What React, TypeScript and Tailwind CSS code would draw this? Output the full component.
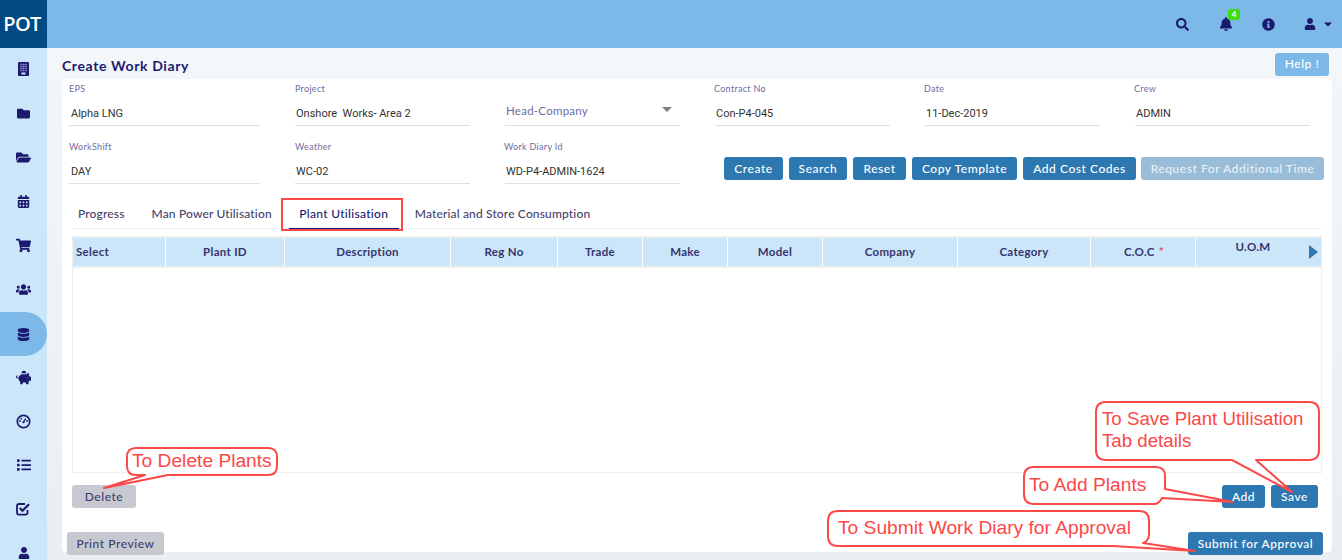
import React from "react";
import {
  FaFolder, FaFolderOpen, FaCalendarAlt, FaShoppingCart, FaUsers, FaDatabase,
  FaPiggyBank, FaList, FaUser, FaSearch, FaBell, FaInfoCircle, FaCaretDown,
} from "react-icons/fa";

const navy = "text-[#1b1a6f]";

function BuildingIcon() {
  return (
    <svg width="11" height="14" viewBox="0 0 11 14">
      <rect width="11" height="14" rx="1" fill="#1b1a6f" />
      <path d="M2 2.5H9M2 4.5H9M2 6.5H9M2 8.5H9M3 1.5V9.5M5.5 1.5V9.5M8 1.5V9.5" stroke="#7b7ab0" strokeWidth="0.8" />
      <rect x="3.5" y="10.5" width="4" height="2" fill="#cbe5f9" />
    </svg>
  );
}

function GaugeIcon() {
  return (
    <svg width="15" height="15" viewBox="0 0 15 15" fill="none">
      <circle cx="7.5" cy="7.5" r="6.2" stroke="#1b1a6f" strokeWidth="1.7" />
      <path d="M7.5 8 L9.6 4.6" stroke="#1b1a6f" strokeWidth="1.3" />
      <circle cx="4" cy="7" r="0.9" fill="#1b1a6f" />
      <circle cx="5.3" cy="4.6" r="0.9" fill="#1b1a6f" />
      <circle cx="11" cy="7" r="0.9" fill="#1b1a6f" />
      <circle cx="7.5" cy="8.2" r="1.1" fill="#1b1a6f" />
    </svg>
  );
}

function CheckIcon() {
  return (
    <svg width="15" height="14" viewBox="0 0 15 14" fill="none">
      <path d="M11.5 8 V10.5 Q11.5 12.6 9.4 12.6 H3 Q1 12.6 1 10.5 V4 Q1 2 3 2 H9" stroke="#1b1a6f" strokeWidth="1.8" />
      <path d="M3.8 6 L6.5 8.7 L13 2.2" stroke="#1b1a6f" strokeWidth="2.3" />
    </svg>
  );
}

const sideIcons: { node: React.ReactNode; active?: boolean }[] = [
  { node: <BuildingIcon /> },
  { node: <FaFolder size={13} /> },
  { node: <FaFolderOpen size={15} /> },
  { node: <FaCalendarAlt size={13} /> },
  { node: <FaShoppingCart size={15} /> },
  { node: <FaUsers size={15} /> },
  { node: <FaDatabase size={13} />, active: true },
  { node: <FaPiggyBank size={15} /> },
  { node: <GaugeIcon /> },
  { node: <FaList size={14} /> },
  { node: <CheckIcon /> },
  { node: <FaUser size={12} /> },
];

function Field({ label, value, first, out }: { label: string; value: string; first?: boolean; out?: boolean }) {
  return (
    <div className="h-[44px] border-b border-[#dfdfdf] pt-[1px]">
      <div className={`${out ? "-ml-px" : ""} text-[9px] leading-[12px] text-[#6f6c9f] font-['Lato',sans-serif] tracking-[0.3px]`}>{label}</div>
      <div className={`mt-[12px] ${first ? "pl-[2px]" : "pl-[1px]"} text-[11px] leading-[14px] text-[#333] font-['Roboto',sans-serif] whitespace-pre`}>{value}</div>
    </div>
  );
}

function Btn({ children, w, kind = "blue" }: { children: React.ReactNode; w: string; kind?: "blue" | "gray" | "faded" | "help" }) {
  const c =
    kind === "blue" ? "bg-[#2e78b2] text-white" :
    kind === "gray" ? "bg-[#c6c9d0] text-[#3f3d73]" :
    kind === "faded" ? "bg-[#99bdd9] text-[#e8eff5]" : "bg-[#7cb8e8] text-white";
  return (
    <button className={`${w} ${c} h-[23px] rounded-[3px] text-[12px] font-medium font-['Lato',sans-serif] tracking-[0.55px] whitespace-nowrap flex items-center justify-center shrink-0`}>
      {children}
    </button>
  );
}

const cols = [
  ["Select", "w-[93px] justify-start pl-[3px]"], ["Plant ID", "w-[119px] justify-center"], ["Description", "w-[166px] justify-center"],
  ["Reg No", "w-[107px] justify-center"], ["Trade", "w-[85px] justify-center"], ["Make", "w-[85px] justify-center"],
  ["Model", "w-[95px] justify-center"], ["Company", "w-[135px] justify-center"], ["Category", "w-[133px] justify-center"],
];

function Callout({ path, tx, lines, size = "text-[19.2px]" }: { path: string; tx: string; lines: string[]; size?: string }) {
  return (
    <div className="absolute left-0 top-0 pointer-events-none">
      <svg className="absolute left-0 top-0 overflow-visible" width="1" height="1">
        <path d={path} fill="white" stroke="#fb4848" strokeWidth="2" strokeLinejoin="round" />
      </svg>
      <div className={`absolute ${tx} ${size} leading-[22px] text-[#fb4848] font-['Liberation_Sans',Arial,sans-serif] whitespace-nowrap`}>
        {lines.map((l) => <div key={l}>{l}</div>)}
      </div>
    </div>
  );
}

export default function App() {
  return (
    <div className="relative w-[1342px] h-[560px] overflow-hidden flex flex-col bg-[#e9eef1] font-['Lato',sans-serif]">
      <header className="h-[48px] shrink-0 bg-[#7cb8e8] flex items-center">
        <div className="w-[47px] h-full pr-[3px] bg-[#014a83] text-white text-[20px] font-semibold font-['Open_Sans',sans-serif] flex items-center justify-center tracking-[-0.6px]">POT</div>
        <div className={`ml-auto flex items-center ${navy}`}>
          <FaSearch size={13} />
          <span className="relative ml-[30px]">
            <FaBell size={14} />
            <span className="absolute left-[9px] top-[-8px] w-[12px] h-[11px] rounded-[2px] bg-[#3fdc0e] text-white text-[8px] leading-[11px] font-bold text-center">4</span>
          </span>
          <FaInfoCircle size={13} className="ml-[29px]" />
          <FaUser size={12} className="ml-[29px]" />
          <FaCaretDown size={12} className="ml-[6px] mr-[8px]" />
        </div>
      </header>
      <div className="flex flex-1 min-h-0">
        <aside className={`w-[47px] shrink-0 bg-[#cbe5f9] flex flex-col ${navy}`}>
          {sideIcons.map(({ node, active }, i) => (
            <div key={i} className={`h-[44px] shrink-0 flex items-center justify-center ${active ? "bg-[#7cb8e8] rounded-r-[22px]" : "pb-[2px]"}`}>
              {node}
            </div>
          ))}
        </aside>
        <main className="flex-1 min-w-0 pl-[15px] pr-[10px] bg-gradient-to-b from-[#f3f7fa] to-[#e9eef1]">
          <div className="h-[31px] flex items-center justify-between">
            <h1 className={`text-[14px] font-bold tracking-[0.62px] ${navy} mt-[4px]`}>Create Work Diary</h1>
            <div className="mr-[3px] mt-[1px]"><Btn w="w-[54px]" kind="help">Help !</Btn></div>
          </div>
          <section className="h-[473px] bg-white rounded-[4px] pt-[3px] pl-[7px] pr-[9px]">
            <div className="grid grid-cols-[191px_175px_175px_175px_175px_175px] gap-x-[35px] gap-y-[14px]">
              <Field first label="EPS" value="Alpha LNG" />
              <Field label="Project" value="Onshore  Works- Area 2" />
              <div className="h-[44px] border-b border-[#dfdfdf] pt-[22px] pl-[1px] flex items-start justify-between pr-[8px]">
                <span className="text-[11.5px] leading-[14px] text-[#6f6c9f] tracking-[0.25px]">Head-Company</span>
                <span className="mt-[3px] w-0 h-0 border-x-[5px] border-x-transparent border-t-[5px] border-t-[#7f7f7f]" />
              </div>
              <Field out label="Contract No" value="Con-P4-045" />
              <Field out label="Date" value="11-Dec-2019" />
              <Field out label="Crew" value="ADMIN" />
              <Field first label="WorkShift" value="DAY" />
              <Field label="Weather" value="WC-02" />
              <Field out label="Work Diary Id" value="WD-P4-ADMIN-1624" />
              <div className="col-span-3 ml-[9px] pt-[17px] flex gap-[6px]">
                <Btn w="w-[59px]">Create</Btn>
                <Btn w="w-[58px]">Search</Btn>
                <Btn w="w-[53px]">Reset</Btn>
                <Btn w="w-[105px]">Copy Template</Btn>
                <Btn w="w-[113px]">Add Cost Codes</Btn>
                <div className="-ml-px"><Btn w="w-[183px]" kind="faded">Request For Additional Time</Btn></div>
              </div>
            </div>
            <nav className="mt-[16px] ml-[3px] mr-[1px] h-[29px] border-b border-[#f0f0f0] flex items-start text-[12px] font-medium tracking-[0.15px] text-[#45436b]">
              <div className="ml-[6px] pt-[6px] leading-[15px]">Progress</div>
              <div className="ml-[27px] pt-[6px] leading-[15px]">Man Power Utilisation</div>
              <div className={`relative ml-[17px] w-[110px] h-[29px] pt-[6px] leading-[15px] text-center tracking-[0.3px] ${navy} border-b border-[#1b1a6f]`}>
                Plant Utilisation
                <div className="absolute left-[-8px] right-[-4px] top-[-2px] bottom-[-3px] border-2 border-[#f94a4a]" />
              </div>
              <div className="ml-[16px] pt-[6px] leading-[15px]">Material and Store Consumption</div>
            </nav>
            <div className="ml-[3px] mt-[7px] w-[1250px] h-[237px] border border-[#eeeeee] border-t-0">
              <div className="h-[32px] border-y-2 border-[#eeeeee] bg-[#cbe5f9] flex text-[11.5px] font-bold tracking-[0.3px] text-[#37356f]">
                {cols.map(([n, c]) => (
                  <div key={n} className={`${c} h-full flex items-center border-r border-white shrink-0`}>{n}</div>
                ))}
                <div className="w-[105px] h-full flex items-center justify-center border-r border-white shrink-0 pl-[2px]">C.O.C<span className="ml-[4px] text-[#f0406a] text-[12px]">*</span></div>
                <div className="flex-1 h-full relative pt-[1px] pr-[11px] text-center leading-[15px]">
                  U.O.M
                  <span className="absolute right-[3px] top-[7px] w-0 h-0 border-y-[7px] border-y-transparent border-l-[9px] border-l-[#2e78b2]" />
                </div>
              </div>
            </div>
            <div className="ml-[3px] mt-[12px] w-[1246px] flex">
              <Btn w="w-[64px]" kind="gray">Delete</Btn>
              <div className="ml-auto flex gap-[6px]">
                <Btn w="w-[43px]">Add</Btn>
                <Btn w="w-[47px]">Save</Btn>
              </div>
            </div>
            <div className="-ml-[2px] mt-[24px] w-[1256px] flex justify-between">
              <Btn w="w-[97px]" kind="gray">Print Preview</Btn>
              <Btn w="w-[135px]">Submit for Approval</Btn>
            </div>
          </section>
        </main>
      </div>
      <Callout tx="left-[132px] top-[450px]" lines={["To Delete Plants"]}
        path="M136 448 H268 Q277 448 277 457 V466 Q277 475 268 475 H168 L104 488 L145 475 H136 Q127 475 127 466 V457 Q127 448 136 448 Z" />
      <Callout size="text-[18.7px]" tx="left-[1102px] top-[408px]" lines={["To Save Plant Utilisation", "Tab details"]}
        path="M1106 402 H1309 Q1319 402 1319 412 V450 Q1319 460 1309 460 H1256 L1292 492 L1232 460 H1106 Q1096 460 1096 450 V412 Q1096 402 1106 402 Z" />
      <Callout tx="left-[1029px] top-[474px]" lines={["To Add Plants"]}
        path="M1033 467 H1156 Q1165 467 1165 476 V489 L1233 502 L1162 498 Q1159 504 1154 504 H1034 Q1024 504 1024 494 V477 Q1024 467 1034 467 Z" />
      <Callout tx="left-[838px] top-[517px]" lines={["To Submit Work Diary for Approval"]}
        path="M838 511 H1139 Q1149 511 1149 521 V534 Q1149 541 1143 543 L1195 551 L1113 546 H838 Q828 546 828 536 V521 Q828 511 838 511 Z" />
    </div>
  );
}
